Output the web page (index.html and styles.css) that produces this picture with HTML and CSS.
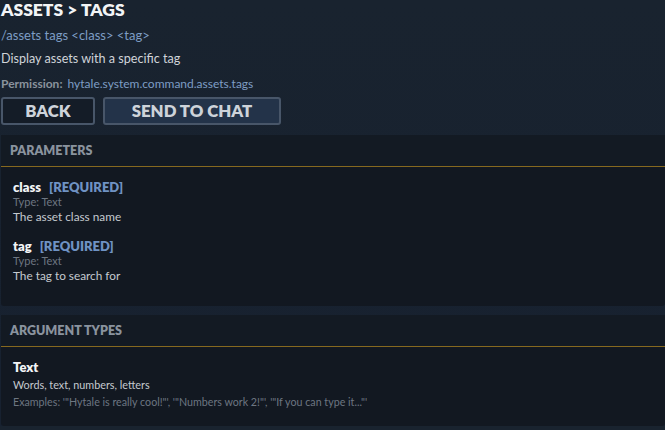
FILE: index.html
```html
<!DOCTYPE HTML>
<html>

<head>
    <title>Assets Tags</title>
    <meta name="viewport" content="width=device-width, initial-scale=1">
    <link rel="stylesheet" href="styles.css">
</head>

<body>
    <div class="page">
        <h1 class="title">ASSETS &gt; TAGS</h1>
        <p class="usage">/assets tags &lt;class&gt; &lt;tag&gt;</p>
        <p class="desc">Display assets with a specific tag</p>
        <p class="perm"><span class="perm-label">Permission:</span> <span class="perm-value">hytale.system.command.assets.tags</span></p>

        <div class="actions">
            <button class="btn btn-back">BACK</button>
            <button class="btn btn-send">SEND TO CHAT</button>
        </div>

        <!-- Parameters -->
        <div class="card">
            <div class="card-head">PARAMETERS</div>
            <div class="card-body">
                <div class="param">
                    <div class="param-name">class <span class="req">[REQUIRED]</span></div>
                    <div class="param-type">Type: Text</div>
                    <div class="param-desc">The asset class name</div>
                </div>
                <div class="param">
                    <div class="param-name">tag <span class="req">[REQUIRED]</span></div>
                    <div class="param-type">Type: Text</div>
                    <div class="param-desc">The tag to search for</div>
                </div>
            </div>
        </div>

        <!-- Argument types -->
        <div class="card card-args">
            <div class="card-head">ARGUMENT TYPES</div>
            <div class="card-body">
                <div class="arg-name">Text</div>
                <div class="arg-desc">Words, text, numbers, letters</div>
                <div class="arg-ex">Examples: '"Hytale is really cool!"', '"Numbers work 2!"', '"If you can type it..."'</div>
            </div>
        </div>
    </div>
</body>

</html>
```

FILE: styles.css
```css
html {
    font-family: Lato, "Noto Sans", sans-serif;
}

body {
    margin: 0;
    background: linear-gradient(180deg, #19232f 0%, #172130 100%);
    color: #d2d6db;
    overflow: hidden;
}

.page {
    padding-left: 1px;
}

.title {
    margin: 0;
    padding-top: 1px;
    font-size: 17.5px;
    font-weight: 800;
    color: #f2f4f6;
    line-height: 18px;
}

.usage {
    margin: 8px 0 0 0;
    font-size: 13px;
    color: #7e9dc4;
    line-height: 16px;
}

.desc {
    margin: 8px 0 0 0;
    font-size: 12.6px;
    color: #d0d4d9;
    line-height: 16px;
}

.perm {
    margin: 10px 0 0 0;
    font-size: 12px;
    line-height: 14px;
}

.perm-label {
    color: #8a939d;
    font-weight: 700;
}

.perm-value {
    color: #7e9dc4;
    margin-left: 2px;
}

.actions {
    display: flex;
    gap: 8px;
    margin-top: 6px;
}

.btn {
    font-family: Lato, "Noto Sans", sans-serif;
    font-weight: 800;
    font-size: 16.8px;
    color: #cdd3da;
    height: 28px;
    border: 2px solid #485669;
    border-radius: 3px;
    padding: 0;
    line-height: 22px;
}

.btn-back {
    width: 94px;
    background-color: #141c27;
}

.btn-send {
    width: 178px;
    background-color: #233349;
}

.card {
    margin-top: 10px;
    background-color: #121821;
    border-radius: 3px;
}

.card + .card {
    margin-top: 9px;
}

.card-head {
    background-color: #131a23;
    color: #8a939e;
    font-weight: 800;
    font-size: 12.5px;
    padding: 8px 9px 8px;
    line-height: 15px;
    border-bottom: 1px solid #86691f;
}

.card-body {
    padding: 12px 12px 9px;
}

.card-args .card-body {
    padding-bottom: 16px;
}

.param {
    margin-bottom: 13px;
}

.param-name {
    font-weight: 800;
    font-size: 13px;
    color: #f2f4f6;
    line-height: 16px;
}

.req {
    color: #6f92c3;
    margin-left: 5px;
}

.param-type {
    font-size: 11px;
    color: #6d7681;
    line-height: 14px;
}

.param-desc {
    font-size: 11.8px;
    color: #c5cad0;
    line-height: 16px;
}

.arg-name {
    font-weight: 800;
    font-size: 13px;
    color: #f2f4f6;
    line-height: 16px;
}

.arg-desc {
    font-size: 10.8px;
    color: #c5cad0;
    line-height: 16px;
    margin-top: 2px;
}

.arg-ex {
    font-size: 10.7px;
    color: #6d7681;
    line-height: 16px;
    margin-top: 1px;
}
```
